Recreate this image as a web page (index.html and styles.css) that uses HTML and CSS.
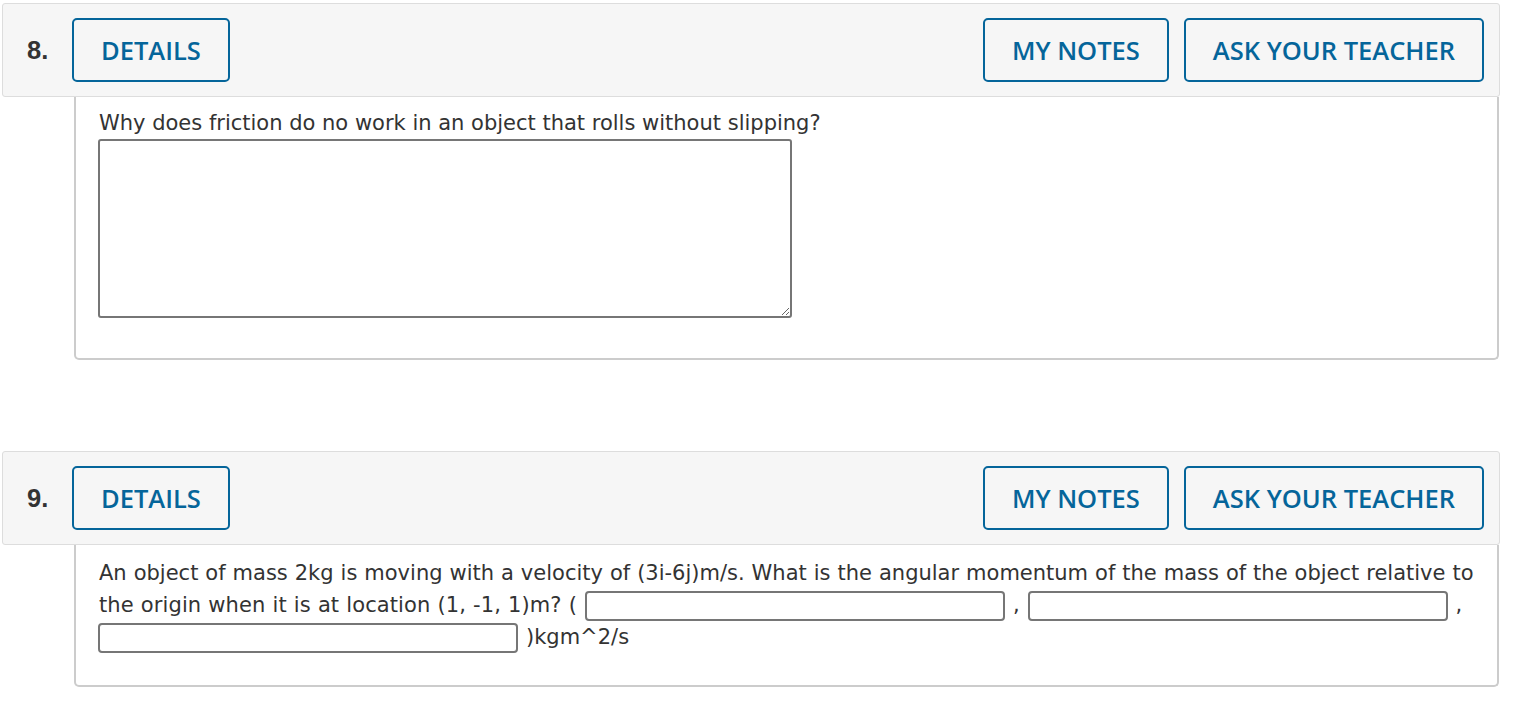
FILE: index.html
```html
<!DOCTYPE html>
<html lang="en">
<head>
<meta charset="utf-8">
<title>Questions</title>
<link rel="stylesheet" href="styles.css">
</head>
<body>
<div class="question q8">
  <div class="q-header">
    <span class="q-num">8.</span>
    <button class="btn">DETAILS</button>
    <div class="spacer"></div>
    <button class="btn">MY NOTES</button>
    <button class="btn">ASK YOUR TEACHER</button>
  </div>
  <div class="q-body">
    <p class="q-text">Why does friction do no work in an object that rolls without slipping?</p>
    <textarea class="answer-area"></textarea>
  </div>
</div>

<div class="question q9">
  <div class="q-header">
    <span class="q-num">9.</span>
    <button class="btn">DETAILS</button>
    <div class="spacer"></div>
    <button class="btn">MY NOTES</button>
    <button class="btn">ASK YOUR TEACHER</button>
  </div>
  <div class="q-body q-body-short">
    <p class="q-text flow">An object of mass 2kg is moving with a velocity of (3i-6j)m/s. What is the angular momentum of the mass of the object relative to<br><span class="wide">the origin when it is at location (1, -1, 1)m? (</span> <input class="ans" type="text"> , <input class="ans" type="text"> ,<br><input class="ans first" type="text"> )kgm^2/s</p>
  </div>
</div>
</body>
</html>
```

FILE: styles.css
```css
html, body {
  margin: 0;
  padding: 0;
  background: #ffffff;
}

body {
  font-family: "DejaVu Sans", Verdana, sans-serif;
  color: #333333;
}

.question {
  margin: 3px 22px 0 2px;
}

.q9 {
  margin-top: 91px;
}

.q-header {
  display: flex;
  align-items: center;
  height: 94px;
  box-sizing: border-box;
  background: #f6f6f6;
  border: 1px solid #dddddd;
  border-radius: 3px;
  padding: 0 15px 0 24px;
  gap: 15px;
}

.q-num {
  font-family: "Liberation Sans", Arial, sans-serif;
  font-weight: bold;
  font-size: 25.5px;
  color: #333333;
  width: 30px;
}

.spacer {
  flex: 1;
}

.btn {
  font-family: "Open Sans", sans-serif;
  font-weight: 600;
  font-size: 25.5px;
  color: #05659a;
  background: transparent;
  border: 2px solid #05659a;
  border-radius: 5px;
  height: 64px;
  padding: 0 27px;
  cursor: pointer;
}

.q-body {
  margin-left: 72px;
  margin-right: 1px;
  border: 2px solid #cccccc;
  border-top: none;
  border-radius: 0 0 5px 5px;
  padding: 14px 22px 0 22px;
  height: 263px;
  box-sizing: border-box;
}

.q-body-short {
  height: 142px;
  padding-top: 12px;
  padding-left: 23px;
}

.q-text {
  margin: 0 0 0 1px;
  font-size: 21px;
  line-height: 24px;
}

.flow {
  margin-left: 0;
  line-height: 32px;
  word-spacing: 0.3px;
}

.wide {
  letter-spacing: 0.1px;
}

.answer-area {
  display: block;
  margin-top: 4px;
  width: 694px;
  height: 179px;
  box-sizing: border-box;
  border: 2px solid #767676;
  border-radius: 3px;
  background: #ffffff;
  resize: both;
}

.ans {
  width: 420px;
  height: 30px;
  box-sizing: border-box;
  border: 2px solid #767676;
  border-radius: 4px;
  background: #ffffff;
  vertical-align: middle;
  margin: 0 1px;
  padding: 0 4px;
}

.ans.first {
  margin-left: -1px;
}
```
